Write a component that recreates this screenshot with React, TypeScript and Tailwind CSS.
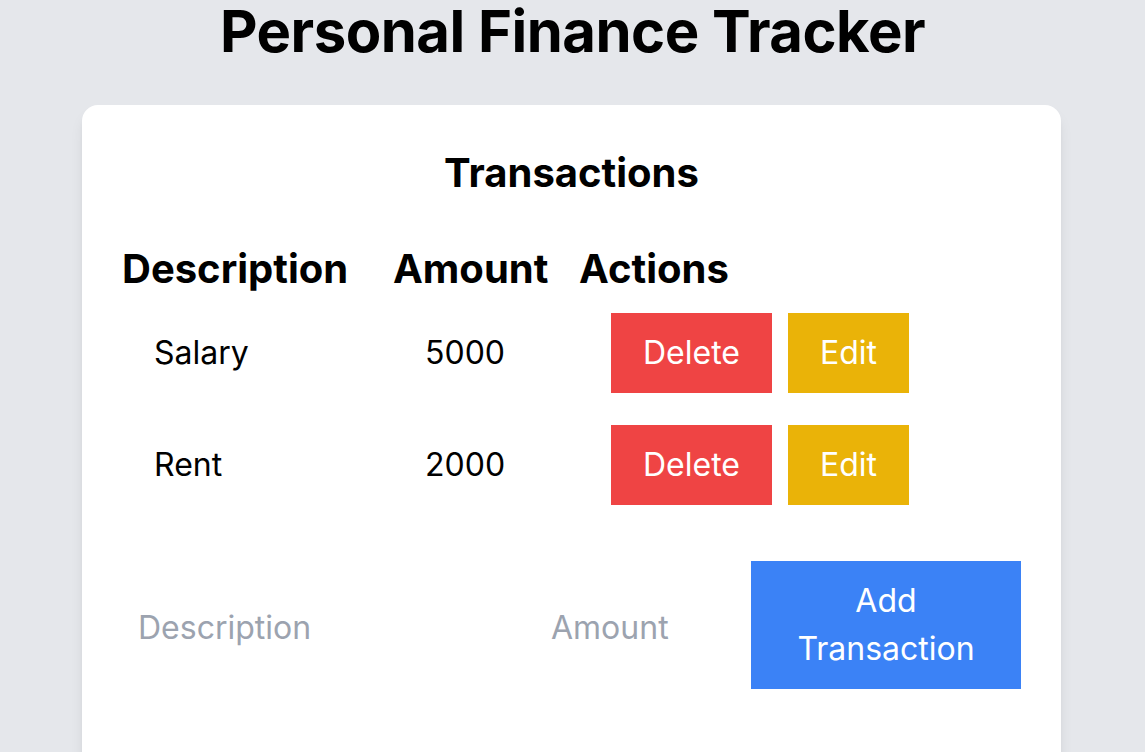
import { useState } from 'react'

type Transaction = {
    id: number
    description: string
    amount: number
}

export default function App() {
    const [transactions] = useState<Transaction[]>([
        { id: 1, description: 'Salary', amount: 5000 },
        { id: 2, description: 'Rent', amount: 2000 },
    ])

    return (
        <div className="min-h-screen bg-[#e5e7eb] font-['Inter',sans-serif] text-black overflow-hidden">
            <h1 className="text-[58px] leading-[62px] font-bold text-center tracking-[-0.5px] mb-[43px]">Personal Finance Tracker</h1>
            <div className="mx-auto w-[979px] -translate-x-[1px] bg-white rounded-2xl shadow-lg p-10 pb-24">
                <h2 className="text-[40px] leading-[56px] font-bold text-center mb-10">Transactions</h2>
                <div className="grid grid-cols-[271px_186px_1fr]">
                    <div className="text-[40px] leading-[56px] font-bold">Description</div>
                    <div className="text-[40px] leading-[56px] font-bold">Amount</div>
                    <div className="text-[40px] leading-[56px] font-bold">Actions</div>
                    {transactions.map((t) => (
                        <div key={t.id} className="contents">
                            <div className="px-8 py-4 flex items-center text-[32px] leading-[48px]">{t.description}</div>
                            <div className="px-8 py-4 flex items-center text-[32px] leading-[48px]">{t.amount}</div>
                            <div className="px-8 py-4 flex items-center gap-4">
                                <button className="bg-[#ef4444] text-white text-[32px] leading-[48px] px-8 py-4">Delete</button>
                                <button className="bg-[#eab308] text-white text-[32px] leading-[48px] px-8 py-4">Edit</button>
                            </div>
                        </div>
                    ))}
                </div>
                <form className="flex items-center gap-4 mt-10" onSubmit={(e) => e.preventDefault()}>
                    <input
                        placeholder="Description"
                        className="flex-1 min-w-0 px-4 py-2 mt-[6px] text-[32px] leading-[48px] outline-none placeholder:text-[#9ca3af]"
                    />
                    <input
                        placeholder="Amount"
                        className="w-[200px] px-4 py-2 mt-[6px] text-[32px] leading-[48px] outline-none placeholder:text-[#9ca3af]"
                    />
                    <button className="w-[270px] bg-[#3b82f6] text-white text-[32px] leading-[48px] px-8 py-4">Add Transaction</button>
                </form>
            </div>
        </div>
    )
}
